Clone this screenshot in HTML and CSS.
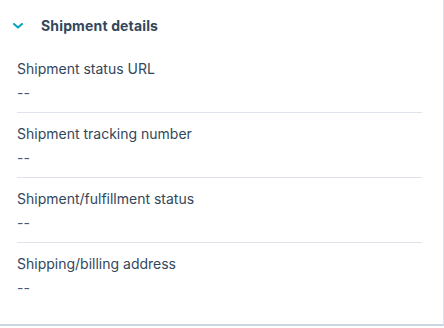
FILE: index.html
```html
<!DOCTYPE html>
<html lang="en">
<head>
    <meta charset="UTF-8">
    <meta name="viewport" content="width=device-width, initial-scale=1.0">
    <title>Shipment details</title>
    <link rel="stylesheet" href="styles.css">
</head>
<body>
    <div class="card">
        <div class="card-header">
            <svg class="chevron" width="10" height="6" viewBox="0 0 10 6">
                <path d="M1 1 L5 4.6 L9 1" fill="none" stroke="#00a4bd" stroke-width="2" stroke-linecap="round" stroke-linejoin="round"/>
            </svg>
            <h2 class="card-title">Shipment details</h2>
        </div>

        <div class="props">
            <div class="prop">
                <div class="prop-label">Shipment status URL</div>
                <div class="prop-value">--</div>
            </div>
            <div class="prop">
                <div class="prop-label">Shipment tracking number</div>
                <div class="prop-value">--</div>
            </div>
            <div class="prop">
                <div class="prop-label">Shipment/fulfillment status</div>
                <div class="prop-value">--</div>
            </div>
            <div class="prop">
                <div class="prop-label">Shipping/billing address</div>
                <div class="prop-value">--</div>
            </div>
        </div>
    </div>
</body>
</html>
```

FILE: styles.css
```css
body {
    margin: 0;
    padding: 0;
    background: #fff;
    font-family: 'Inter', 'Noto Sans', sans-serif;
    color: #33475b;
}

.card {
    width: 443px;
    height: 324px;
    border-right: 1px solid #dfe3eb;
    border-bottom: 2px solid #cbd6e2;
    box-sizing: content-box;
}

.card-header {
    display: flex;
    align-items: center;
    padding: 16px 0 12px 13px;
    height: 20px;
}

.chevron {
    margin-right: 18px;
}

.card-title {
    margin: 0;
    font-size: 14px;
    font-weight: 700;
    line-height: 20px;
    letter-spacing: 0.15px;
}

.props {
    padding: 0 21px 0 17px;
}

.prop {
    display: flex;
    flex-direction: column;
    gap: 4px;
    padding: 11px 0 9px;
    border-bottom: 1px solid #dfe3eb;
    font-size: 14px;
    line-height: 20px;
}

.prop:last-child {
    border-bottom: none;
}

.prop-value {
    color: #425b76;
}
```
